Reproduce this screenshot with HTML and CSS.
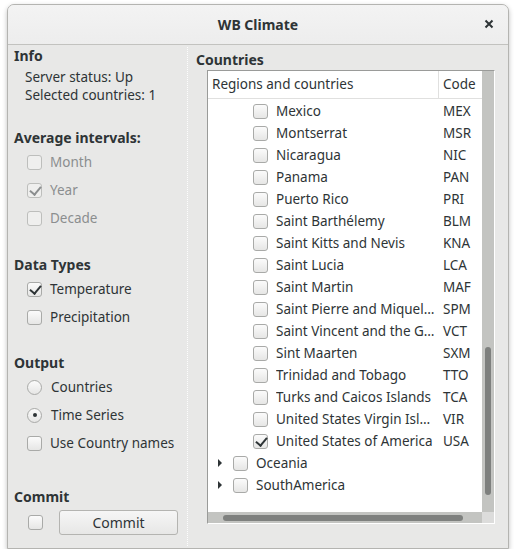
FILE: index.html
```html
<!DOCTYPE html>
<html>
<head>
<meta charset="utf-8">
<link rel="stylesheet" href="styles.css">
</head>
<body>
<div class="window">
  <div class="titlebar">
    <span class="title">WB Climate</span>
    <span class="close">
      <svg width="10" height="10" viewBox="0 0 10 10"><path d="M1.5 1.5 L8.5 8.5 M8.5 1.5 L1.5 8.5" stroke="#2e3436" stroke-width="2" stroke-linecap="butt"/></svg>
    </span>
  </div>
  <div class="content">
    <div class="left">
      <div class="sec sec-info">
        <div class="stitle">Info</div>
        <div class="info">Server status: Up</div>
        <div class="info">Selected countries: 1</div>
      </div>
      <div class="sec sec-avg">
        <div class="stitle">Average intervals:</div>
        <div class="item disabled"><span class="cb"></span>Month</div>
        <div class="item disabled"><span class="cb checked"></span>Year</div>
        <div class="item disabled"><span class="cb"></span>Decade</div>
      </div>
      <div class="sec sec-types">
        <div class="stitle">Data Types</div>
        <div class="item"><span class="cb checked"></span>Temperature</div>
        <div class="item"><span class="cb"></span>Precipitation</div>
      </div>
      <div class="sec sec-out">
        <div class="stitle">Output</div>
        <div class="item"><span class="rb"></span>Countries</div>
        <div class="item"><span class="rb on"></span>Time Series</div>
        <div class="item"><span class="cb"></span>Use Country names</div>
      </div>
      <div class="sec sec-commit">
        <div class="stitle">Commit</div>
        <div class="commitrow"><span class="cb"></span><button class="btn">Commit</button></div>
      </div>
    </div>
    <div class="splitter"></div>
    <div class="right">
      <div class="stitle rtitle">Countries</div>
      <div class="frame">
        <div class="view">
          <div class="main">
            <div class="header">
              <div class="hcol c1">Regions and countries</div>
              <div class="hcol c2">Code</div>
            </div>
            <div class="rows">
              <div class="row"><span class="cb"></span><span class="name">Mexico</span><span class="code">MEX</span></div>
              <div class="row"><span class="cb"></span><span class="name">Montserrat</span><span class="code">MSR</span></div>
              <div class="row"><span class="cb"></span><span class="name">Nicaragua</span><span class="code">NIC</span></div>
              <div class="row"><span class="cb"></span><span class="name">Panama</span><span class="code">PAN</span></div>
              <div class="row"><span class="cb"></span><span class="name">Puerto Rico</span><span class="code">PRI</span></div>
              <div class="row"><span class="cb"></span><span class="name">Saint Barthélemy</span><span class="code">BLM</span></div>
              <div class="row"><span class="cb"></span><span class="name">Saint Kitts and Nevis</span><span class="code">KNA</span></div>
              <div class="row"><span class="cb"></span><span class="name">Saint Lucia</span><span class="code">LCA</span></div>
              <div class="row"><span class="cb"></span><span class="name">Saint Martin</span><span class="code">MAF</span></div>
              <div class="row"><span class="cb"></span><span class="name">Saint Pierre and Miquel…</span><span class="code">SPM</span></div>
              <div class="row"><span class="cb"></span><span class="name">Saint Vincent and the G…</span><span class="code">VCT</span></div>
              <div class="row"><span class="cb"></span><span class="name">Sint Maarten</span><span class="code">SXM</span></div>
              <div class="row"><span class="cb"></span><span class="name">Trinidad and Tobago</span><span class="code">TTO</span></div>
              <div class="row"><span class="cb"></span><span class="name">Turks and Caicos Islands</span><span class="code">TCA</span></div>
              <div class="row"><span class="cb"></span><span class="name">United States Virgin Isl…</span><span class="code">VIR</span></div>
              <div class="row"><span class="cb checked"></span><span class="name">United States of America</span><span class="code">USA</span></div>
              <div class="row region"><span class="arrow"></span><span class="cb"></span><span class="name">Oceania</span></div>
              <div class="row region"><span class="arrow"></span><span class="cb"></span><span class="name">SouthAmerica</span></div>
            </div>
          </div>
          <div class="vscroll"><div class="vthumb"></div></div>
        </div>
        <div class="hbar">
          <div class="hscroll"><div class="hthumb"></div></div>
          <div class="corner"></div>
        </div>
      </div>
    </div>
  </div>
</div>
</body>
</html>
```

FILE: styles.css
```css
* { box-sizing: border-box; }
html, body { margin: 0; padding: 0; background: #ffffff; }
body {
  font-family: "Noto Sans", "DejaVu Sans", sans-serif;
  font-size: 13.5px;
  color: #2e3436;
  padding: 4px 0 0 7px;
}
.window {
  width: 502px;
  height: 545px;
  border: 1px solid #b4b4b1;
  border-radius: 7px 7px 0 0;
  background: #e8e8e7;
  box-shadow: 0 2px 5px rgba(0,0,0,0.25);
  display: flex;
  flex-direction: column;
  overflow: hidden;
}
.titlebar {
  height: 40px;
  flex: none;
  background: linear-gradient(#f3f3f3, #ededed);
  border-bottom: 1px solid #c2c2bf;
  display: flex;
  align-items: center;
  justify-content: center;
  position: relative;
}
.title { font-weight: bold; font-size: 14px; }
.close {
  position: absolute;
  right: 14px;
  top: 14px;
  width: 10px;
  height: 10px;
  display: flex;
}
.content { flex: 1; display: flex; min-height: 0; }
.left {
  width: 179px;
  flex: none;
  padding: 1px 0 0 6px;
  display: flex;
  flex-direction: column;
}
.splitter {
  width: 1px;
  flex: none;
  background-image: linear-gradient(#ffffff 50%, transparent 50%);
  background-size: 1px 2px;
  opacity: 0.9;
  margin: 2px 0;
}
.stitle { font-weight: bold; line-height: 20px; height: 20px; font-size: 14px; }
.info { line-height: 18px; padding-left: 11px; }
.sec-info .stitle { margin-bottom: 2px; }
.sec-avg { margin-top: 24px; }
.sec-types { margin-top: 23px; }
.sec-out { margin-top: 22px; }
.sec-commit { margin-top: 30px; }
.item {
  height: 28px;
  display: flex;
  align-items: center;
  padding-left: 13px;
}
.sec-out .item:first-of-type { margin-top: -1px; }
.item.disabled { color: #8b8e8f; }
.cb {
  width: 15px;
  height: 15px;
  flex: none;
  border: 1px solid #a9aaa8;
  border-radius: 3px;
  background: linear-gradient(#fbfbfb, #e6e6e5);
  margin-right: 8px;
  position: relative;
}
.cb.checked::after {
  content: "";
  position: absolute;
  left: 4px;
  top: 0px;
  width: 5px;
  height: 9px;
  border: solid #2e3436;
  border-width: 0 2.5px 2.5px 0;
  transform: rotate(40deg);
}
.disabled .cb { border-color: #bdbebc; background: #efefee; }
.disabled .cb.checked::after { border-color: #8b8e8f; border-width: 0 2px 2px 0; }
.rb {
  width: 15px;
  height: 15px;
  flex: none;
  border: 1px solid #a9aaa8;
  border-radius: 50%;
  background: linear-gradient(#fbfbfb, #e6e6e5);
  margin-right: 9px;
  position: relative;
}
.rb.on::after {
  content: "";
  position: absolute;
  left: 4.5px;
  top: 4.5px;
  width: 4px;
  height: 4px;
  border-radius: 50%;
  background: #2e3436;
}
.commitrow {
  margin-top: 3px;
  height: 25px;
  display: flex;
  align-items: center;
  padding-left: 14px;
}
.commitrow .cb { margin-right: 16px; }
.btn {
  width: 119px;
  height: 25px;
  border: 1px solid #b4b4b1;
  border-radius: 3px;
  background: linear-gradient(#f6f6f6, #e7e7e6);
  font: inherit;
  font-size: 14px;
  color: #2e3436;
  padding: 0;
}
.right {
  flex: 1;
  padding: 5px 14px 0 19px;
  display: flex;
  flex-direction: column;
}
.rtitle { margin-left: -11px; }
.frame {
  width: 288px;
  height: 454px;
  border-left: 1px solid #9a9b99;
  border-top: 1px solid #9a9b99;
  border-right: 1px solid #ffffff;
  border-bottom: 1px solid #ffffff;
  background: #ffffff;
  display: flex;
  flex-direction: column;
}
.view { flex: 1; display: flex; min-height: 0; }
.main { flex: 1; min-width: 0; overflow: hidden; }
.header {
  height: 28px;
  display: flex;
  border-bottom: 1px solid #e0e0df;
  line-height: 27px;
}
.hcol { white-space: nowrap; overflow: hidden; }
.c1 { width: 231px; padding-left: 4px; border-right: 1px solid #e0e0df; }
.c2 { flex: 1; padding-left: 4px; }
.rows { padding-top: 1px; }
.row {
  height: 22px;
  display: flex;
  align-items: center;
  padding-left: 45px;
  white-space: nowrap;
}
.row .cb { margin-right: 8px; }
.row .name { width: 164px; overflow: hidden; flex: none; }
.row .code { padding-left: 3px; }
.row.region { padding-left: 8px; }
.arrow {
  width: 0; height: 0;
  flex: none;
  border-top: 4px solid transparent;
  border-bottom: 4px solid transparent;
  border-left: 4px solid #2e3436;
  margin-right: 11px;
  margin-left: 2px;
}
.vscroll {
  width: 12px;
  flex: none;
  background: #c3c4c1;
  position: relative;
}
.vthumb {
  position: absolute;
  left: 3px;
  top: 276px;
  width: 6px;
  height: 148px;
  border-radius: 3px;
  background: #7e807e;
}
.hbar { height: 11px; flex: none; display: flex; }
.hscroll { flex: 1; background: #c3c4c1; position: relative; }
.hthumb {
  position: absolute;
  top: 3px;
  left: 15px;
  width: 240px;
  height: 6px;
  border-radius: 3px;
  background: #7e807e;
}
.corner { width: 12px; background: #dcdcdb; }
```
